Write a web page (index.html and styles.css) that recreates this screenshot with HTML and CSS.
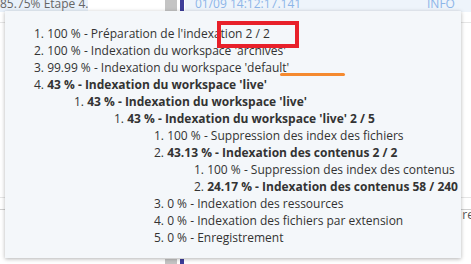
FILE: index.html
```html
<!DOCTYPE html>
<html lang="fr">
<head>
    <meta charset="UTF-8">
    <title>Journal - Indexation</title>
    <link rel="stylesheet" href="styles.css">
</head>
<body>

    <div class="log-table">
        <div class="log-row first-row">
            <div class="cell-step">85.75% Etape 4.</div>
            <div class="cell-gap"></div>
            <div class="cell-bar"><span class="bar-grey"></span><span class="bar-blue"></span></div>
            <div class="cell-date">01/09 14:12:17.141</div>
            <div class="cell-level">INFO</div>
        </div>
        <div class="log-row middle-row"></div>
        <div class="log-row middle-row short-row"></div>
        <div class="log-row text-row"><div class="cell-end">re</div></div>
        <div class="log-row last-row">
            <div class="cell-step"></div>
            <div class="cell-gap"></div>
            <div class="cell-bar"><span class="bar-grey"></span><span class="bar-blue"></span></div>
        </div>
    </div>

    <div class="progress-tooltip">
        <ol class="steps">
            <li>100 % - Préparation de l'indexation 2 / 2</li>
            <li>100 % - Indexation du workspace 'archives'</li>
            <li>99.99 % - Indexation du workspace 'default'</li>
            <li><b>43 % - Indexation du workspace 'live'</b>
                <ol>
                    <li><b>43 % - Indexation du workspace 'live'</b>
                        <ol>
                            <li><b>43 % - Indexation du workspace 'live' 2 / 5</b>
                                <ol>
                                    <li>100 % - Suppression des index des fichiers</li>
                                    <li><b>43.13 % - Indexation des contenus 2 / 2</b>
                                        <ol>
                                            <li>100 % - Suppression des index des contenus</li>
                                            <li><b>24.17 % - Indexation des contenus 58 / 240</b></li>
                                        </ol>
                                    </li>
                                    <li>0 % - Indexation des ressources</li>
                                    <li>0 % - Indexation des fichiers par extension</li>
                                    <li>0 % - Enregistrement</li>
                                </ol>
                            </li>
                        </ol>
                    </li>
                </ol>
            </li>
        </ol>
    </div>

    <!-- annotations drawn over the screenshot -->
    <div class="mark-box"></div>
    <div class="mark-line"></div>

</body>
</html>
```

FILE: styles.css
```css
body {
    margin: 0;
    width: 471px;
    height: 264px;
    overflow: hidden;
    background-color: #ffffff;
    font-family: 'Open Sans', sans-serif;
    font-size: 12px;
    position: relative;
}

.log-table {
    display: flex;
    flex-direction: column;
}

.log-row {
    display: flex;
    border-bottom: 1px solid #e6e6e6;
    box-sizing: border-box;
}

.first-row {
    height: 23px;
    line-height: 8px;
    color: #666666;
}

.middle-row {
    height: 175px;
}

.short-row {
    height: 12px;
    border-bottom-color: #d0d0d0;
}

.text-row {
    height: 49px;
    justify-content: flex-end;
    border-bottom: none;
    line-height: 8px;
}

.cell-end {
    color: #555555;
    padding-top: 1px;
    margin-right: -3px;
}

.last-row {
    height: 5px;
    border-bottom: none;
}

.last-row .cell-step,
.last-row .cell-bar {
    height: 5px;
}

.cell-step {
    width: 88px;
    height: 12px;
    background-color: #e9f1fa;
    white-space: nowrap;
    overflow: hidden;
}

.last-row .cell-step {
    background-color: #ffffff;
}

.cell-gap {
    width: 77px;
}

.cell-bar {
    display: flex;
    width: 20px;
    height: 12px;
    gap: 3px;
}

.bar-grey {
    width: 12px;
    background-color: #c4c4c4;
}

.bar-blue {
    width: 4px;
    background-color: #3d3d99;
}

.cell-date {
    width: 232px;
    height: 12px;
    padding-left: 10px;
    box-sizing: border-box;
    background-color: #eef4fb;
    color: #8db5e8;
    white-space: nowrap;
}

.cell-level {
    height: 12px;
    padding-left: 10px;
    color: #8db5e8;
    background-color: #eef4fb;
    flex: 1;
}

.progress-tooltip {
    position: absolute;
    left: 5px;
    top: 11px;
    width: 456px;
    height: 247px;
    box-sizing: border-box;
    padding: 14px 0 0 29px;
    background-color: #f4f7fa;
    box-shadow: 0 1px 4px rgba(0, 0, 0, 0.3);
    color: #333333;
    line-height: 17px;
}

.progress-tooltip ol {
    margin: 0;
    padding-left: 40px;
    list-style: decimal inside;
}

.progress-tooltip .steps {
    padding-left: 0;
}

.progress-tooltip b {
    font-weight: bold;
}

.mark-box {
    position: absolute;
    left: 217px;
    top: 21px;
    width: 82px;
    height: 27px;
    box-sizing: border-box;
    border: 4px solid #e8202a;
}

.mark-line {
    position: absolute;
    left: 280px;
    top: 73px;
    width: 65px;
    height: 3px;
    border-radius: 2px;
    background-color: #f58a30;
}
```
